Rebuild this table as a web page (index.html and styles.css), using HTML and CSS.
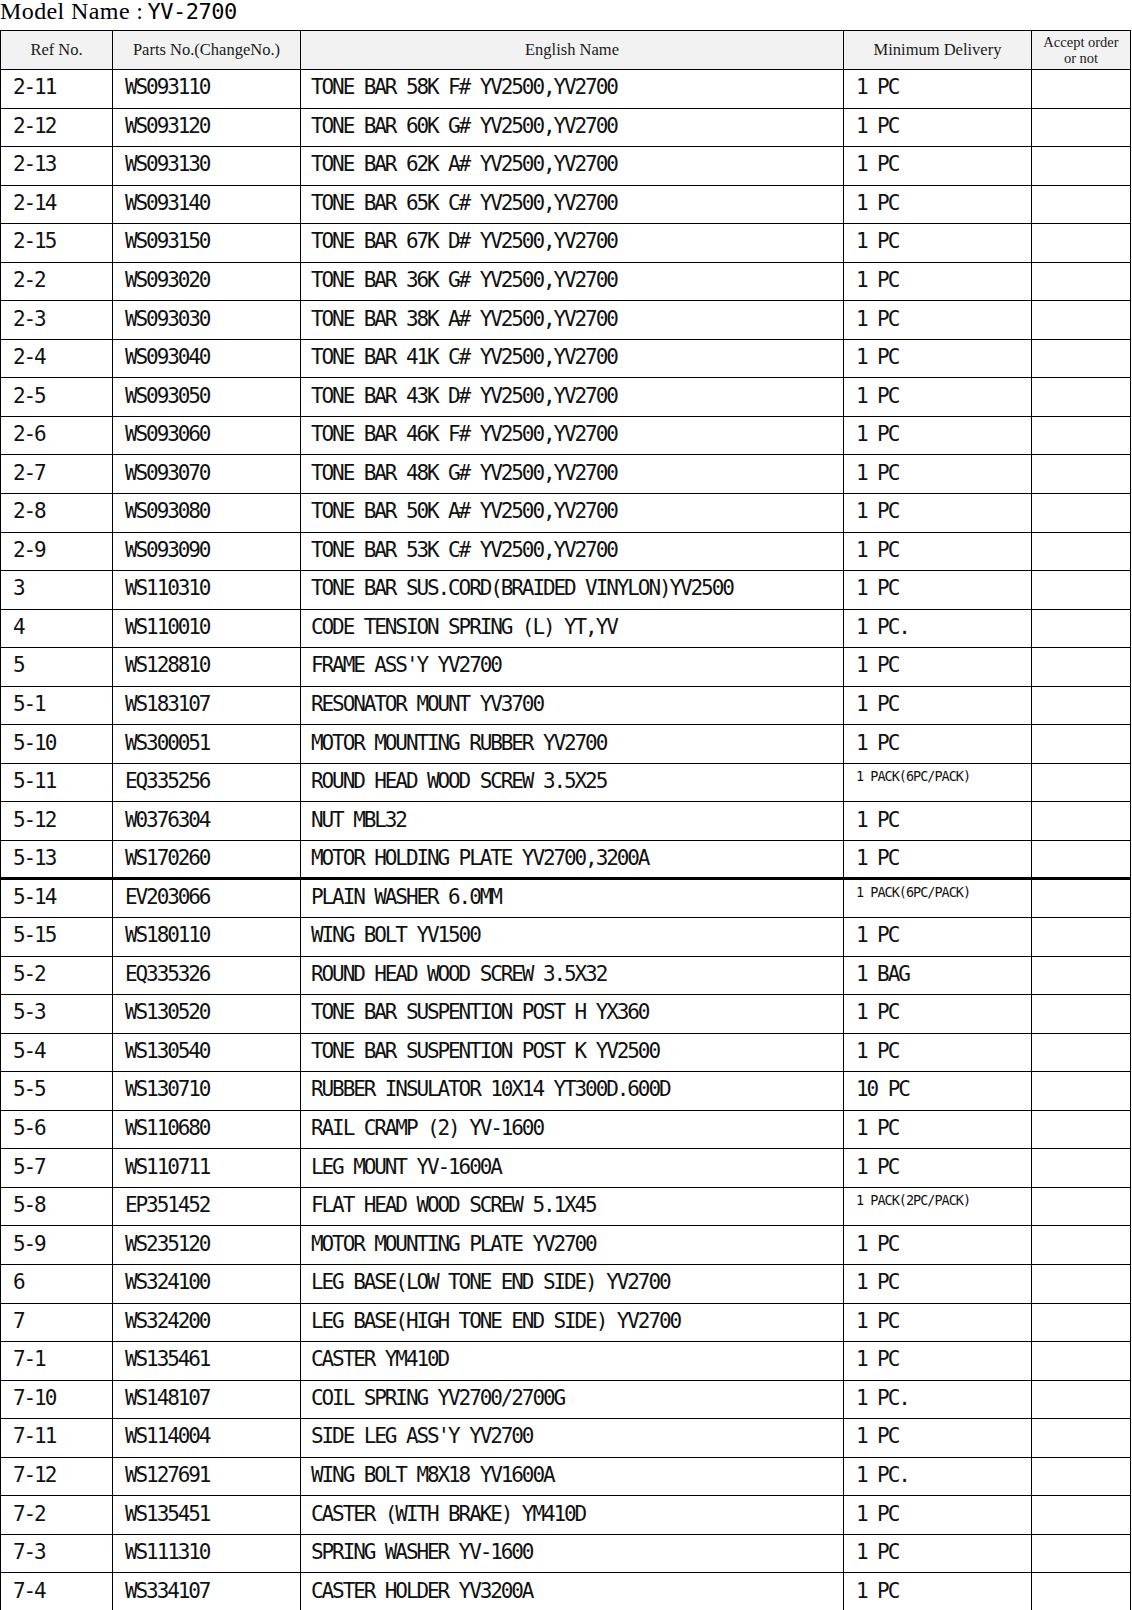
FILE: index.html
```html
<!DOCTYPE html>
<html>
<head>
<meta charset="utf-8">
<link rel="stylesheet" href="styles.css">
</head>
<body>
<div class="title"><span class="title-label">Model Name :</span> <span class="title-model">YV-2700</span></div>
<table class="parts">
  <colgroup>
    <col class="c-ref"><col class="c-part"><col class="c-name"><col class="c-min"><col class="c-acc">
  </colgroup>
  <thead>
    <tr>
      <th>Ref No.</th>
      <th>Parts No.(ChangeNo.)</th>
      <th>English Name</th>
      <th>Minimum Delivery</th>
      <th class="acc">Accept order<br>or not</th>
    </tr>
  </thead>
  <tbody>
    <tr><td>2-11</td><td>WS093110</td><td>TONE BAR 58K F# YV2500,YV2700</td><td>1 PC</td><td></td></tr>
    <tr><td>2-12</td><td>WS093120</td><td>TONE BAR 60K G# YV2500,YV2700</td><td>1 PC</td><td></td></tr>
    <tr><td>2-13</td><td>WS093130</td><td>TONE BAR 62K A# YV2500,YV2700</td><td>1 PC</td><td></td></tr>
    <tr><td>2-14</td><td>WS093140</td><td>TONE BAR 65K C# YV2500,YV2700</td><td>1 PC</td><td></td></tr>
    <tr><td>2-15</td><td>WS093150</td><td>TONE BAR 67K D# YV2500,YV2700</td><td>1 PC</td><td></td></tr>
    <tr><td>2-2</td><td>WS093020</td><td>TONE BAR 36K G# YV2500,YV2700</td><td>1 PC</td><td></td></tr>
    <tr><td>2-3</td><td>WS093030</td><td>TONE BAR 38K A# YV2500,YV2700</td><td>1 PC</td><td></td></tr>
    <tr><td>2-4</td><td>WS093040</td><td>TONE BAR 41K C# YV2500,YV2700</td><td>1 PC</td><td></td></tr>
    <tr><td>2-5</td><td>WS093050</td><td>TONE BAR 43K D# YV2500,YV2700</td><td>1 PC</td><td></td></tr>
    <tr><td>2-6</td><td>WS093060</td><td>TONE BAR 46K F# YV2500,YV2700</td><td>1 PC</td><td></td></tr>
    <tr><td>2-7</td><td>WS093070</td><td>TONE BAR 48K G# YV2500,YV2700</td><td>1 PC</td><td></td></tr>
    <tr><td>2-8</td><td>WS093080</td><td>TONE BAR 50K A# YV2500,YV2700</td><td>1 PC</td><td></td></tr>
    <tr><td>2-9</td><td>WS093090</td><td>TONE BAR 53K C# YV2500,YV2700</td><td>1 PC</td><td></td></tr>
    <tr><td>3</td><td>WS110310</td><td>TONE BAR SUS.CORD(BRAIDED VINYLON)YV2500</td><td>1 PC</td><td></td></tr>
    <tr><td>4</td><td>WS110010</td><td>CODE TENSION SPRING (L) YT,YV</td><td>1 PC.</td><td></td></tr>
    <tr><td>5</td><td>WS128810</td><td>FRAME ASS'Y YV2700</td><td>1 PC</td><td></td></tr>
    <tr><td>5-1</td><td>WS183107</td><td>RESONATOR MOUNT YV3700</td><td>1 PC</td><td></td></tr>
    <tr><td>5-10</td><td>WS300051</td><td>MOTOR MOUNTING RUBBER YV2700</td><td>1 PC</td><td></td></tr>
    <tr><td>5-11</td><td>EQ335256</td><td>ROUND HEAD WOOD SCREW 3.5X25</td><td class="small">1 PACK(6PC/PACK)</td><td></td></tr>
    <tr><td>5-12</td><td>W0376304</td><td>NUT MBL32</td><td>1 PC</td><td></td></tr>
    <tr><td>5-13</td><td>WS170260</td><td>MOTOR HOLDING PLATE YV2700,3200A</td><td>1 PC</td><td></td></tr>
    <tr class="break"><td>5-14</td><td>EV203066</td><td>PLAIN WASHER 6.0MM</td><td class="small">1 PACK(6PC/PACK)</td><td></td></tr>
    <tr><td>5-15</td><td>WS180110</td><td>WING BOLT YV1500</td><td>1 PC</td><td></td></tr>
    <tr><td>5-2</td><td>EQ335326</td><td>ROUND HEAD WOOD SCREW 3.5X32</td><td>1 BAG</td><td></td></tr>
    <tr><td>5-3</td><td>WS130520</td><td>TONE BAR SUSPENTION POST H YX360</td><td>1 PC</td><td></td></tr>
    <tr><td>5-4</td><td>WS130540</td><td>TONE BAR SUSPENTION POST K YV2500</td><td>1 PC</td><td></td></tr>
    <tr><td>5-5</td><td>WS130710</td><td>RUBBER INSULATOR 10X14 YT300D.600D</td><td>10 PC</td><td></td></tr>
    <tr><td>5-6</td><td>WS110680</td><td>RAIL CRAMP (2) YV-1600</td><td>1 PC</td><td></td></tr>
    <tr><td>5-7</td><td>WS110711</td><td>LEG MOUNT YV-1600A</td><td>1 PC</td><td></td></tr>
    <tr><td>5-8</td><td>EP351452</td><td>FLAT HEAD WOOD SCREW 5.1X45</td><td class="small">1 PACK(2PC/PACK)</td><td></td></tr>
    <tr><td>5-9</td><td>WS235120</td><td>MOTOR MOUNTING PLATE YV2700</td><td>1 PC</td><td></td></tr>
    <tr><td>6</td><td>WS324100</td><td>LEG BASE(LOW TONE END SIDE) YV2700</td><td>1 PC</td><td></td></tr>
    <tr><td>7</td><td>WS324200</td><td>LEG BASE(HIGH TONE END SIDE) YV2700</td><td>1 PC</td><td></td></tr>
    <tr><td>7-1</td><td>WS135461</td><td>CASTER YM410D</td><td>1 PC</td><td></td></tr>
    <tr><td>7-10</td><td>WS148107</td><td>COIL SPRING YV2700/2700G</td><td>1 PC.</td><td></td></tr>
    <tr><td>7-11</td><td>WS114004</td><td>SIDE LEG ASS'Y YV2700</td><td>1 PC</td><td></td></tr>
    <tr><td>7-12</td><td>WS127691</td><td>WING BOLT M8X18 YV1600A</td><td>1 PC.</td><td></td></tr>
    <tr><td>7-2</td><td>WS135451</td><td>CASTER (WITH BRAKE) YM410D</td><td>1 PC</td><td></td></tr>
    <tr><td>7-3</td><td>WS111310</td><td>SPRING WASHER YV-1600</td><td>1 PC</td><td></td></tr>
    <tr><td>7-4</td><td>WS334107</td><td>CASTER HOLDER YV3200A</td><td>1 PC</td><td></td></tr>
  </tbody>
</table>
</body>
</html>
```
FILE: styles.css
```css
html, body {
  margin: 0;
  padding: 0;
  background: #fff;
}

body {
  color: #000;
}

.title {
  height: 30px;
  line-height: 22px;
  white-space: nowrap;
}

.title-label {
  font-family: "Liberation Serif", serif;
  font-size: 24px;
  letter-spacing: 0.4px;
}

.title-model {
  font-family: "DejaVu Sans Mono", monospace;
  font-size: 22px;
  letter-spacing: -0.5px;
}

.parts {
  border-collapse: collapse;
  table-layout: fixed;
  width: 1130px;
}

.c-ref { width: 112px; }
.c-part { width: 188px; }
.c-name { width: 543px; }
.c-min { width: 188px; }
.c-acc { width: 99px; }

.parts th,
.parts td {
  border: 1.5px solid #000;
  padding: 0;
  overflow: hidden;
  white-space: nowrap;
}

.parts th {
  height: 38px;
  background: #f2f2f2;
  font-family: "Liberation Serif", serif;
  font-size: 16.5px;
  font-weight: normal;
  color: #1a1a1a;
  text-align: center;
  vertical-align: middle;
}

.parts th.acc {
  font-size: 14.5px;
  line-height: 16px;
  white-space: normal;
}

.parts tbody tr {
  height: 38.55px;
}

.parts td {
  font-family: "DejaVu Sans Mono", monospace;
  font-size: 21px;
  letter-spacing: -2.1px;
  color: #111;
  padding-left: 12px;
  padding-bottom: 3px;
  vertical-align: middle;
  text-align: left;
}

.parts td:nth-child(3) {
  padding-left: 10px;
}

.parts td.small {
  font-size: 13.5px;
  letter-spacing: -1px;
  vertical-align: top;
  padding-top: 4px;
  padding-bottom: 0;
}

.parts tr.break td {
  border-top-width: 3px;
}
```
